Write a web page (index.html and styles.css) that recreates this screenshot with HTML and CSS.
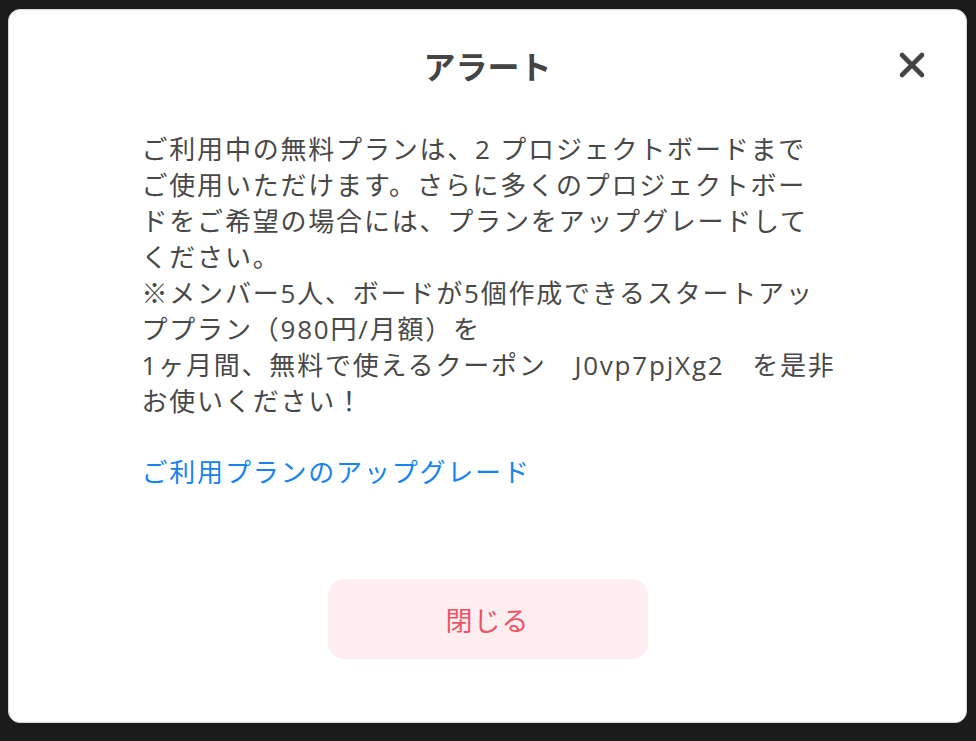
FILE: index.html
```html
<!DOCTYPE html>
<html lang="ja">
<head>
    <meta charset="UTF-8">
    <meta name="viewport" content="width=device-width, initial-scale=1.0">
    <title>アラート</title>
    <link rel="stylesheet" href="styles.css">
</head>
<body>
    <div class="modal">
        <div class="modal-header">
            <h1 class="modal-title">アラート</h1>
            <button class="close-button" aria-label="閉じる">
                <svg width="28" height="28" viewBox="0 0 28 28">
                    <path d="M4 4 L24 24 M24 4 L4 24" stroke="#444" stroke-width="4.6" stroke-linecap="round" fill="none"/>
                </svg>
            </button>
        </div>

        <div class="modal-body">
            <p class="message">
                ご利用中の無料プランは、2 プロジェクトボードまで<br>
                ご使用いただけます。さらに多くのプロジェクトボー<br>
                ドをご希望の場合には、プランをアップグレードして<br>
                ください。<br>
                ※メンバー5人、ボードが5個作成できるスタートアッ<br>
                ププラン（980円/月額）を<br>
                1ヶ月間、無料で使えるクーポン　J0vp7pjXg2　を是非<br>
                お使いください！
            </p>
            <a class="upgrade-link" href="#">ご利用プランのアップグレード</a>
        </div>

        <div class="modal-footer">
            <button class="dismiss-button">閉じる</button>
        </div>
    </div>
</body>
</html>
```

FILE: styles.css
```css
body {
    margin: 0;
    min-height: 741px;
    background-color: #1b1b1b;
    font-family: "Open Sans", "Noto Sans CJK JP", sans-serif;
    color: #444;
    overflow: hidden;
}
.modal {
    position: relative;
    box-sizing: border-box;
    width: 959px;
    height: 714px;
    margin: 9px 0 0 8px;
    background-color: #fff;
    border: 1px solid #d6d6d6;
    border-radius: 12px;
    display: flex;
    flex-direction: column;
}
.modal-header {
    padding-top: 37px;
    text-align: center;
}
.modal-title {
    margin: 0;
    font-size: 32px;
    line-height: 40px;
    font-weight: 700;
    color: #444;
}
.close-button {
    position: absolute;
    top: 41px;
    right: 40px;
    width: 28px;
    height: 28px;
    padding: 0;
    border: none;
    background: none;
    cursor: pointer;
}
.close-button svg {
    display: block;
}
.modal-body {
    width: 692px;
    margin: 44px auto 0;
}
.message {
    margin: 0;
    font-size: 26px;
    line-height: 36px;
    letter-spacing: 1.8px;
    white-space: nowrap;
    color: #484848;
}
.upgrade-link {
    display: block;
    margin-top: 35px;
    font-size: 26px;
    line-height: 36px;
    letter-spacing: 1.8px;
    color: #1683ef;
    text-decoration: none;
}
.modal-footer {
    display: flex;
    justify-content: center;
    margin-top: 89px;
}
.dismiss-button {
    width: 320px;
    height: 80px;
    border: none;
    border-radius: 16px;
    background-color: #ffeef0;
    color: #ec5466;
    font-family: "Open Sans", "Noto Sans CJK JP", sans-serif;
    font-size: 27px;
    letter-spacing: 1px;
    cursor: pointer;
}
```
